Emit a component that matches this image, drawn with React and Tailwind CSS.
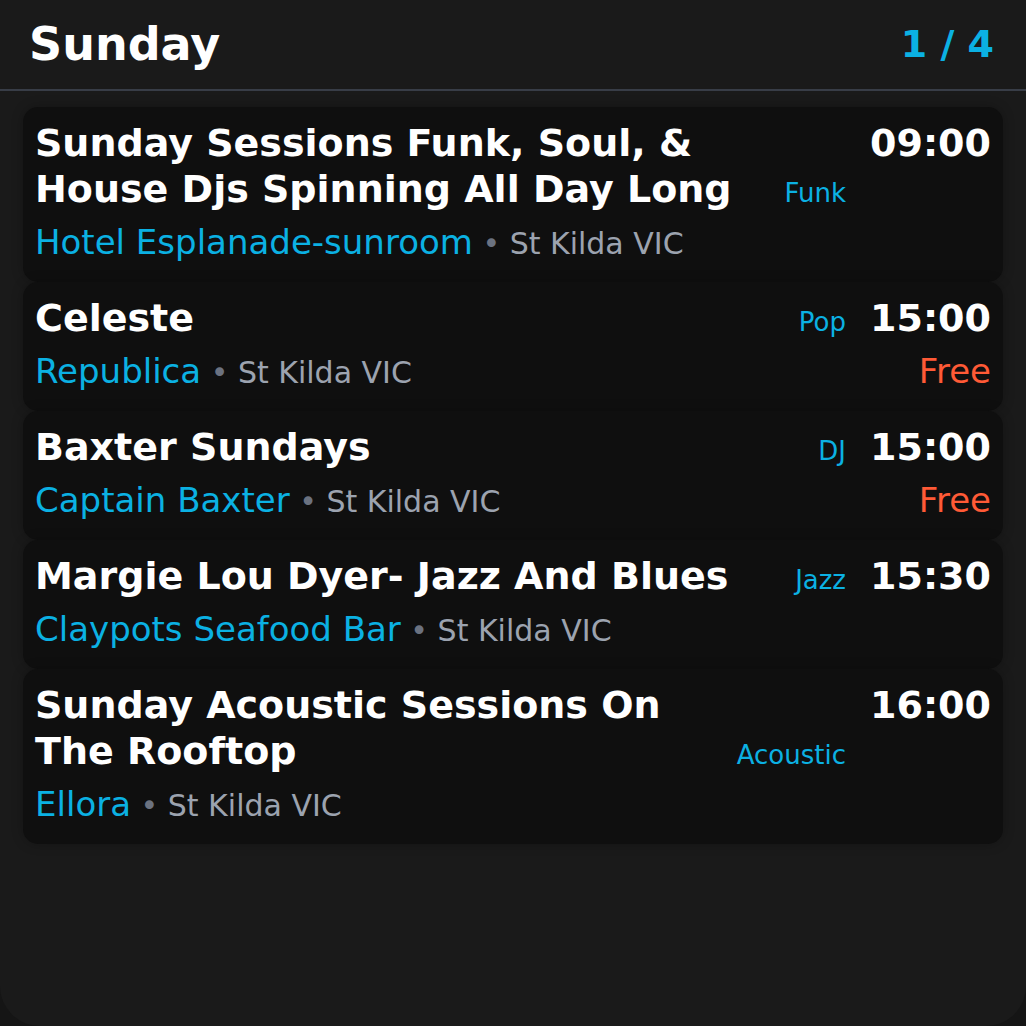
import React from 'react';

const events = [
  {
    id: 1,
    title: 'Sunday Sessions Funk, Soul, & House Djs Spinning All Day Long',
    genre: 'Funk',
    time: '09:00',
    venue: 'Hotel Esplanade-sunroom',
    location: 'St Kilda VIC',
    free: false,
  },
  {
    id: 2,
    title: 'Celeste',
    genre: 'Pop',
    time: '15:00',
    venue: 'Republica',
    location: 'St Kilda VIC',
    free: true,
  },
  {
    id: 3,
    title: 'Baxter Sundays',
    genre: 'DJ',
    time: '15:00',
    venue: 'Captain Baxter',
    location: 'St Kilda VIC',
    free: true,
  },
  {
    id: 4,
    title: 'Margie Lou Dyer- Jazz And Blues',
    genre: 'Jazz',
    time: '15:30',
    venue: 'Claypots Seafood Bar',
    location: 'St Kilda VIC',
    free: false,
  },
  {
    id: 5,
    title: 'Sunday Acoustic Sessions On The Rooftop',
    genre: 'Acoustic',
    time: '16:00',
    venue: 'Ellora',
    location: 'St Kilda VIC',
    free: false,
  },
];

const EventCard = ({ event }) => (
  <div className="bg-[#0f0f0f] rounded-[15px] pl-3 pr-3 pt-[13px] pb-[14px] flex gap-6 shadow-[0_0_12px_rgba(0,0,0,0.25)]">
    <div className="flex-1 min-w-0">
      <div className="flex items-baseline-last gap-4">
        <h3 className="flex-1 text-[38px] leading-[46px] font-bold text-white">{event.title}</h3>
        <span className="shrink-0 text-[26px] leading-[36px] text-[#0bb1e3]">{event.genre}</span>
      </div>
      <p className="mt-[6px] text-[34px] leading-[48px]">
        <span className="text-[#0bb1e3]">{event.venue}</span>
        <span className="text-[30px] text-[#6b7280]"> • </span>
        <span className="text-[30px] text-[#9ca3af]">{event.location}</span>
      </p>
    </div>
    <div className="shrink-0 text-right">
      <div className="text-[38px] leading-[46px] font-bold text-white">{event.time}</div>
      {event.free && (
        <div className="mt-[6px] text-[34px] leading-[48px] text-[#ff5a36]">Free</div>
      )}
    </div>
  </div>
);

export default function App() {
  return (
    <div className="bg-[#151515] min-h-[1026px] font-['DejaVu_Sans',sans-serif]">
      <div className="h-[1026px] bg-[#1a1a1a] rounded-b-[40px] overflow-hidden">
        <div className="h-[91px] flex items-center justify-between pl-[29px] pr-[32px] border-b-2 border-[#383d47]">
          <h1 className="text-[46px] font-bold text-white">Sunday</h1>
          <span className="text-[38px] font-bold text-[#0bb1e3]">1 / 4</span>
        </div>
        <div className="px-[23px] pt-4">
          {events.map(event => (
            <EventCard key={event.id} event={event} />
          ))}
        </div>
      </div>
    </div>
  );
}
